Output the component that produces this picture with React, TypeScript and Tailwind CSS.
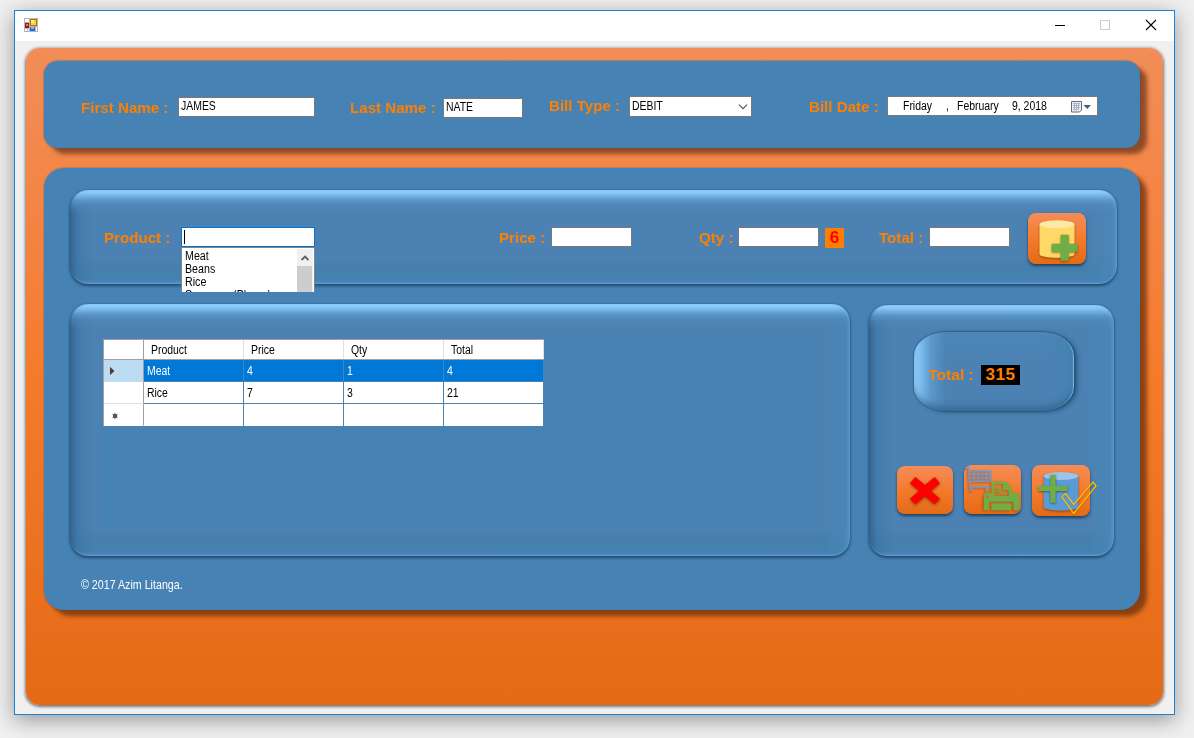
import type { ReactNode } from "react";

const textFont = "font-['Liberation_Sans',Arial,sans-serif]";

function Small({ children, className = "" }: { children: ReactNode; className?: string }) {
  return (
    <span className={`block origin-left scale-x-[0.87] whitespace-pre text-[12px] leading-[14px] ${className}`}>
      {children}
    </span>
  );
}

function Label({ children, className = "" }: { children: ReactNode; className?: string }) {
  return (
    <span
      className={`block shrink-0 origin-left scale-x-[1.08] whitespace-pre text-[14px] font-bold leading-[16px] text-[#ff8000] ${className}`}
    >
      {children}
    </span>
  );
}

function Field({ value = "", className = "" }: { value?: string; className?: string }) {
  return (
    <div className={`h-5 shrink-0 border border-[#7a7a7a] bg-white pl-[2px] pt-px text-black ${className}`}>
      <Small>{value}</Small>
    </div>
  );
}

const bevel =
  "bg-[linear-gradient(to_bottom,#92d0ff_0,#8ac8fa_3px,rgba(112,174,226,.95)_7px,rgba(92,150,202,.8)_11px,rgba(80,138,188,.5)_16px,rgba(75,130,179,0)_24px),linear-gradient(to_right,rgba(40,85,125,.65)_0,rgba(50,105,150,.3)_8px,rgba(74,130,180,0)_24px),linear-gradient(to_left,rgba(72,136,186,.8)_0,rgba(74,134,182,0)_26px),linear-gradient(to_top,#4f8ec3_0,#4781b2_4px,#457fae_14px,rgba(75,130,179,0)_30px)] bg-[#4b82b3] shadow-[inset_0_-1px_1px_#5c9dd8,inset_1px_0_1px_rgba(35,75,110,.4),inset_-4px_2px_4px_-3px_rgba(120,185,235,.5),0_2px_3px_rgba(25,60,90,.75),0_0_2px_rgba(25,60,90,.5)]";

function Title() {
  return (
    <header className="flex h-[30px] items-start bg-white">
      <svg className="ml-[9px] mt-[7px]" width="14" height="14" viewBox="0 0 14 14" shapeRendering="crispEdges">
        <path d="M0 0h14v14H0z" fill="#b5b5b5" />
        <path d="M1 1h4v3H1zM1 11h2v2H1zM4 11h1v2H4zM12 9h1v4h-1z" fill="#fff" />
        <path d="M1 5h4v5H1z" fill="#a31515" />
        <path d="M2 6h2v2H2z" fill="#ee7b68" />
        <path d="M6 1h7v7H6z" fill="#ad7a00" />
        <path d="M7 2h5v5H7z" fill="#ffcf2e" />
        <path d="M7 2h3v3H7z" fill="#ffe98e" />
        <path d="M6 9h5v4H6z" fill="#2d66d0" />
        <path d="M7 9h3v2H7z" fill="#82b3fa" />
      </svg>
      <svg className="ml-auto mr-[16px] mt-[8px]" width="103" height="13" viewBox="0 0 103 13" fill="none">
        <path d="M0 6.5h10" stroke="#000" />
        <rect x="45.5" y="1.5" width="9" height="9" stroke="#ccc" />
        <path d="M91 1l10 10M101 1L91 11" stroke="#000" strokeWidth="1.1" />
      </svg>
    </header>
  );
}

function CustomerBar() {
  return (
    <section className="ml-[18px] mt-[13px] flex h-[87px] w-[1096px] items-start rounded-[14px] bg-[#4682b4] pl-[37px] shadow-[7px_6px_4px_rgba(110,55,25,.75),0_0_1px_1px_rgba(90,100,120,.4)]">
      <Label className="mt-[39px] w-[97px]">First Name :</Label>
      <Field value="JAMES" className="mt-[36px] w-[137px]" />
      <Label className="ml-[35px] mt-[39px] w-[93px]">Last Name :</Label>
      <Field value="NATE" className="mt-[37px] w-[80px]" />
      <Label className="ml-[26px] mt-[37px] w-[80px]">Bill Type :</Label>
      <div className="mt-[35px] flex h-[21px] w-[123px] shrink-0 items-start justify-between border border-[#7a7a7a] bg-white pl-[2px] pr-[3px] pt-[2px]">
        <Small>DEBIT</Small>
        <svg className="mt-[5px]" width="10" height="6" viewBox="0 0 10 6" fill="none" stroke="#555" strokeWidth="1.2">
          <path d="M1 .7l4 4 4-4" />
        </svg>
      </div>
      <Label className="ml-[57px] mt-[38px] w-[78px]">Bill Date :</Label>
      <div className="mt-[35px] flex h-5 w-[211px] shrink-0 items-start border border-[#7a7a7a] bg-white pl-[15px] pt-[2px]">
        <Small className="w-[43px]">Friday</Small>
        <Small className="w-[11px]">,</Small>
        <Small className="w-[55px]">February</Small>
        <Small className="w-[58px]">9, 2018</Small>
        <svg className="mt-px" width="22" height="13" viewBox="0 0 22 13" fill="none">
          <path d="M1.500 1.500h10v8.500l-2 2h-8z" fill="#e9eef7" stroke="#75656a" />
          <path d="M3 3.500h7M3 5.500h7M3 7.500h7M3 9.500h5M4.500 3v7.500M6.500 3v7.500M8.500 3v7" stroke="#95a5c4" strokeWidth=".7" />
          <path d="M13.500 5h7.500l-3.750 4z" fill="#3e5f8f" />
        </svg>
      </div>
    </section>
  );
}

function AddButton() {
  return (
    <button className="ml-[18px] mt-[23px] h-[51px] w-[58px] shrink-0 rounded-[8px] bg-linear-to-b from-[#f48d57] via-[#f57b2b] to-[#e36a16] shadow-[0_2px_3px_rgba(20,40,60,.75)]">
      <svg width="58" height="51" viewBox="0 0 58 51">
        <g className="drop-shadow-[0_1px_1px_rgba(100,50,0,.6)]">
          <path d="M11.500 11v30c0 5 35 5 35 0V11z" fill="#ffd966" />
          <ellipse cx="29" cy="11.300" rx="17.500" ry="4" fill="#ffe8a3" />
        </g>
        <path
          className="drop-shadow-[0_1px_1px_rgba(70,60,0,.6)]"
          d="M32.700 21.700h8v9h8.800v8h-8.800v9h-8v-9h-9v-8h9z"
          fill="#70ad47"
        />
      </svg>
    </button>
  );
}

const suggestions = ["Meat", "Beans", "Rice", "Samsung (Phone)"];

function ProductPanel() {
  return (
    <section className={`ml-[26px] flex h-[94px] w-[1047px] items-start rounded-[18px] pl-[34px] ${bevel}`}>
      <Label className="mt-[40px] w-[77px]">Product :</Label>
      <div className="relative mt-[37px] w-[134px] shrink-0">
        <div className="h-5 border border-[#0078d7] bg-white pl-[2px] pt-[2px]">
          <div className="h-[14px] w-px bg-black" />
        </div>
        <div className="absolute left-0 top-[20px] z-10 flex h-[45px] w-[134px] overflow-hidden border border-b-0 border-[#828282] bg-white">
          <div className="grow pl-[3px] pt-[2px]">
            {suggestions.map((item) => (
              <div key={item} className="h-[13px] origin-left scale-x-[0.89] whitespace-pre text-[12px] leading-[13px]">
                {item}
              </div>
            ))}
          </div>
          <div className="mr-px mt-px w-[16px] bg-[#f0f0f0]">
            <svg width="16" height="17" viewBox="0 0 16 17" fill="none" stroke="#606060" strokeWidth="1.800">
              <path d="M4.500 11L8 7.500 11.500 11" />
            </svg>
            <div className="h-[28px] w-[15px] bg-[#cdcdcd]" />
          </div>
        </div>
      </div>
      <Label className="ml-[184px] mt-[40px] w-[52px]">Price :</Label>
      <Field className="mt-[37px] w-[81px]" />
      <Label className="ml-[67px] mt-[40px] w-[39px]">Qty :</Label>
      <Field className="mt-[37px] w-[81px]" />
      <div className="ml-[6px] mt-[38px] h-5 w-[19px] shrink-0 bg-[#ff8000] text-center text-[17px] font-bold leading-[20px] text-[#ff0000]">
        6
      </div>
      <Label className="ml-[35px] mt-[40px] w-[50px]">Total :</Label>
      <Field className="mt-[37px] w-[81px]" />
      <AddButton />
    </section>
  );
}

const rows = [
  ["Meat", "4", "1", "4"],
  ["Rice", "7", "3", "21"],
  ["", "", "", ""],
];

function ItemsTable() {
  return (
    <div className="h-[188px] w-[712px] bg-[#4682b4]">
      <div className="w-[441px] border-l border-t border-[#a0a0a0] bg-white">
        <div className="flex h-5 border-b border-[#a0a0a0]">
          <div className="w-10 border-r border-[#a0a0a0]" />
          {["Product", "Price", "Qty", "Total"].map((name) => (
            <div key={name} className="w-[100px] border-r border-[#e0e0e0] pl-[7px] pt-[3px]">
              <Small>{name}</Small>
            </div>
          ))}
        </div>
        {rows.map((row, i) => (
          <div key={i} className={`flex h-[22px] ${i === 0 ? "bg-[#0078d7] text-white" : "text-black"}`}>
            <div
              className={`w-10 border-b border-r border-r-[#a0a0a0] ${i === 0 ? "border-b-[#bcdcf4] bg-[#bcdcf4]" : i === 1 ? "border-b-[#e0e0e0] bg-white" : "border-b-white bg-white"}`}
            >
              <svg width="39" height="21" viewBox="0 0 39 21">
                {i === 0 && <path d="M5.500 6v10l5.500-5z" fill="#404040" stroke="#fff" strokeWidth=".6" />}
                {i === 2 && (
                  <>
                    <circle cx="11" cy="12" r="2.200" fill="#404040" />
                    <path d="M11 9v6M8.300 10.300l5.400 3.400M8.300 13.700l5.400-3.400" stroke="#606060" strokeWidth=".8" />
                  </>
                )}
              </svg>
            </div>
            {row.map((cell, j) => (
              <div key={j} className={`w-[100px] border-r border-[#4682b4] pl-[3px] pt-[4px] ${i < 2 ? "border-b" : ""}`}>
                <Small>{cell}</Small>
              </div>
            ))}
          </div>
        ))}
      </div>
    </div>
  );
}

const actionButton =
  "shrink-0 rounded-[8px] bg-linear-to-b from-[#f48d57] via-[#f57b2b] to-[#e36a16] shadow-[0_2px_3px_rgba(20,40,60,.75)]";

function Actions() {
  return (
    <div className="ml-[28px] flex items-start">
      <button className={`mt-px h-12 w-[56px] ${actionButton}`}>
        <svg width="56" height="48" viewBox="49 48 168 144">
          <path
            className="drop-shadow-[0_3px_4px_rgba(90,30,0,.7)]"
            d="M88 100L104 81 133 105 162 81 178 100 151 122 178 146 162 163 133 139 104 163 88 146 115 122z"
            fill="#f00"
          />
        </svg>
      </button>
      <button className={`ml-[11px] h-[49px] w-[57px] ${actionButton}`}>
        <svg className="overflow-visible" width="57" height="49" viewBox="251 46 171 147">
          <g className="drop-shadow-[-3px_4px_3px_rgba(80,40,10,.45)]" fill="none" stroke="#6f9bd1" strokeWidth="4">
            <path d="M254 53h10l5 59h59M264 63h67v31l-62 2M267 74h64M268 85h62M280 63v33M293 63v33M306 63v33M318 63v32" />
            <circle cx="273" cy="120" r="3.500" fill="#6f9bd1" strokeWidth="3" />
            <circle cx="319" cy="120" r="3.500" fill="#6f9bd1" strokeWidth="3" />
          </g>
          <g className="drop-shadow-[-3px_2px_3px_rgba(80,40,10,.45)]">
            <path
              d="M333 96h43l18 18v16h16q7 0 7 8v44h-18v-26h-73v26h-16v-44q0-8 8-8h15zM342 104v34h43v-16h-17v-18z"
              fill="#70ad47"
              fillRule="evenodd"
            />
            <path d="M333 161h60v21h-60z" fill="#70ad47" />
            <path d="M347 115h15M347 124h15M347 132h33" stroke="#70ad47" strokeWidth="4" />
            <circle cx="321" cy="141" r="4.500" fill="#d56b24" />
          </g>
        </svg>
      </button>
      <button className={`ml-[11px] h-[51px] w-[58px] ${actionButton}`}>
        <svg className="overflow-visible" width="58" height="51" viewBox="455 47 174 153">
          <g className="drop-shadow-[0_3px_3px_rgba(80,40,10,.6)]">
            <path d="M490 80v92c0 15 104 15 104 0V80z" fill="#5b9bd5" />
            <ellipse cx="542" cy="80" rx="52" ry="12" fill="#9dc3e6" />
          </g>
          <path
            className="drop-shadow-[0_3px_3px_rgba(20,50,70,.6)]"
            d="M510 76h16v34h36v15h-36v35h-16v-35h-36v-15h36z"
            fill="#70ad47"
          />
          <path
            className="drop-shadow-[0_2px_2px_rgba(80,40,10,.4)]"
            d="M545 144l10-11 25 33 58-68 9 12-67 83z"
            fill="none"
            stroke="#ffc000"
            strokeWidth="4"
          />
        </svg>
      </button>
    </div>
  );
}

function SummaryPanel() {
  return (
    <section className={`mt-px h-[251px] w-[245px] rounded-[18px] ${bevel}`}>
      <div className="ml-[45px] mt-[27px] flex h-[79px] w-[160px] items-start rounded-[32px/24px] bg-[#4b82b3] bg-[linear-gradient(to_right,#8fcfff_0,#80bff0_6px,#5b97cb_17px,rgba(75,130,179,0)_32px),linear-gradient(to_left,#4682b4,rgba(70,130,180,0)_34px),linear-gradient(to_bottom,#4a86b8,rgba(75,130,179,0)_25px)] pl-[14px] shadow-[inset_-2px_0_1px_-1px_#78b9ed,inset_0_-7px_7px_-3px_rgba(40,85,125,.6),3px_1px_4px_rgba(25,65,95,.7),0_0_1px_1px_rgba(35,80,115,.5)]">
        <span className="mt-[34px] block w-[53px] shrink-0 origin-left scale-x-[1.01] whitespace-pre text-[15.5px] font-bold leading-[18px] text-[#ff8000]">
          Total :
        </span>
        <div className="mt-[33px] h-5 w-[39px] bg-black text-center text-[17px] font-bold leading-[20px] tracking-[0.5px] text-[#ff8000]">
          315
        </div>
      </div>
      <div className="h-[54px]" />
      <Actions />
    </section>
  );
}

export default function App() {
  return (
    <div className={`h-[738px] w-[1194px] overflow-hidden bg-[#f0f0f0] pl-[14px] pt-[10px] ${textFont}`}>
      <main className="flex h-[705px] w-[1161px] flex-col border border-[#1883d7] bg-[#f0f0f0] shadow-[0_5px_20px_rgba(0,0,0,.38)]">
        <Title />
        <div className="ml-[11px] mt-[7px] flex h-[657px] w-[1137px] flex-col rounded-[14px] bg-linear-to-b from-[#f28d57] via-[#f57b2b] to-[#e46a15] shadow-[0_1px_3px_1px_rgba(0,0,0,.5)]">
          <CustomerBar />
          <section className="ml-[18px] mt-5 h-[442px] w-[1096px] shrink-0 rounded-[20px] bg-[#4682b4] pt-[22px] shadow-[7px_6px_4px_rgba(105,48,12,.75),0_0_1px_1px_rgba(90,100,120,.3)]">
            <ProductPanel />
            <div className="ml-[26px] mt-5 flex h-[253px] items-start gap-[19px]">
              <section className={`h-[252px] w-[780px] rounded-[18px] pl-[33px] pt-[35px] ${bevel}`}>
                <ItemsTable />
              </section>
              <SummaryPanel />
            </div>
            <div className="ml-[37px] mt-[21px] origin-left scale-x-[0.89] text-[12px] leading-[14px] text-white">
              © 2017 Azim Litanga.
            </div>
          </section>
        </div>
      </main>
    </div>
  );
}
